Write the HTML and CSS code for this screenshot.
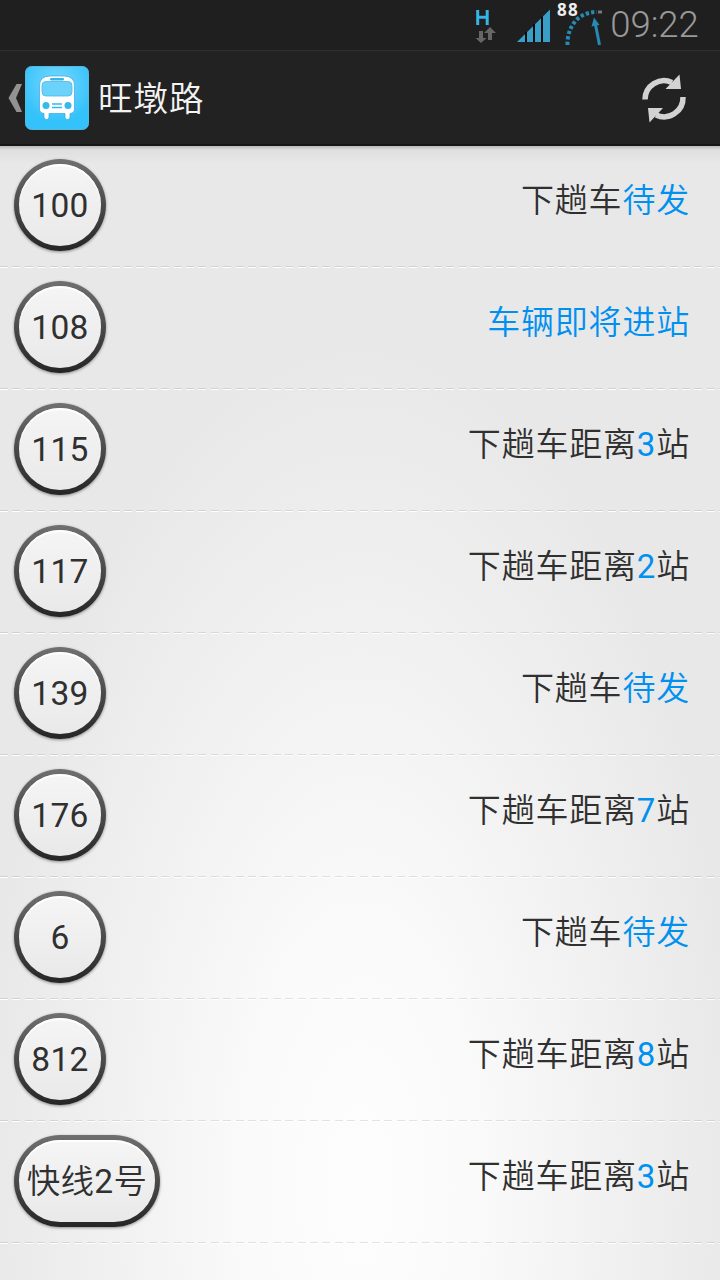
FILE: index.html
```html
<!DOCTYPE html>
<html lang="zh-CN">
<head>
<meta charset="utf-8">
<title>旺墩路</title>
<link rel="stylesheet" href="styles.css">
</head>
<body>
<div class="status">
  <svg class="status-icons" width="130" height="50" viewBox="475 0 130 50">
    <path d="M477.700 10V25M487.200 10V25M477.700 17.200H487.200" fill="none" stroke="#35b5e5" stroke-width="3"/>
    <path d="M479 31h4v7h3.500l-5.500 5l-5.500-5h3.500zM488 40h4v-7h4l-6-6l-6 6h4z" fill="#666"/>
    <path d="M517 42L550 9.500V42z" fill="#3a9fc7"/>
    <path d="M526 32V42M534 24V42M542 16.500V42" stroke="#0b0b0b" stroke-width="2"/>
    <path d="M567.500 45C567 28 577 12 597 12" fill="none" stroke="#258ab4" stroke-width="4" stroke-dasharray="3.300 2.200"/>
    <path d="M598 10.500h4v3h-4z" fill="#777"/>
    <path d="M599.500 45L595 22" fill="none" stroke="#258ab4" stroke-width="3"/>
    <path d="M594 17.500l5.500 7.500l-8 1.500z" fill="#258ab4"/>
    <text class="battery" x="557" y="16">88</text>
  </svg>
  <span class="clock">09:22</span>
</div>
<header class="bar">
  <svg class="back" width="17" height="30" viewBox="0 0 17 30"><path d="M8.500 1H14L8 15l6 14H8.500L.5 15z" fill="#929292"/></svg>
  <svg class="logo" width="64" height="64" viewBox="0 0 64 64">
    <defs><radialGradient id="sky" cx=".5" cy=".28" r=".6"><stop offset="0" stop-color="#7ad8ff"/><stop offset="1" stop-color="#34c2fa"/></radialGradient></defs>
    <rect x=".5" y=".5" width="63" height="63" rx="6" fill="url(#sky)" stroke="#55b9df"/>
    <path d="M14.500 20Q14.500 10 25 10H39Q49.500 10 49.500 20V43Q49.500 47 45 47.500V51Q45 53.500 42.500 53.500T40 51V47.500H24V51Q24 53.500 21.500 53.500T19 51V47.500Q14.500 47 14.500 43z" fill="#fff" stroke="#35a9d9" stroke-width=".7"/>
    <rect x="25" y="12" width="14" height="2.500" rx="1.200" fill="#36b5e8"/>
    <rect x="17" y="15.500" width="30" height="14.500" rx="4" fill="#6bd2fc" stroke="#48b8e7" stroke-width=".8"/>
    <circle cx="21" cy="39.500" r="3.500" fill="#36b9ed"/><circle cx="43" cy="39.500" r="3.500" fill="#36b9ed"/>
    <path d="M27 38h10M27 41.500h10" stroke="#36b9ed" stroke-width="1.500"/>
  </svg>
  <h1 class="title">旺墩路</h1>
  <svg class="refresh" width="46" height="50" viewBox="641 74 46 50">
    <path d="M645 99.500A19 19 0 0 1 672 82.500M683 97A19 19 0 0 1 656 115" fill="none" stroke="#d2d2d2" stroke-width="5.500"/>
    <path d="M679.500 74.500L681 89H665.500zM649.500 122.500L648 108H663z" fill="#d2d2d2"/>
  </svg>
</header>
<main class="list">
  <div class="row"><span class="line num">100</span><p class="info">下趟车<b>待发</b></p></div>
  <div class="row"><span class="line num">108</span><p class="info"><b>车辆即将进站</b></p></div>
  <div class="row"><span class="line num">115</span><p class="info">下趟车距离<b class="num">3</b>站</p></div>
  <div class="row"><span class="line num">117</span><p class="info">下趟车距离<b class="num">2</b>站</p></div>
  <div class="row"><span class="line num">139</span><p class="info">下趟车<b>待发</b></p></div>
  <div class="row"><span class="line num">176</span><p class="info">下趟车距离<b class="num">7</b>站</p></div>
  <div class="row"><span class="line num">6</span><p class="info">下趟车<b>待发</b></p></div>
  <div class="row"><span class="line num">812</span><p class="info">下趟车距离<b class="num">8</b>站</p></div>
  <div class="row"><span class="line name">快线<span class="num">2</span>号</span><p class="info">下趟车距离<b class="num">3</b>站</p></div>
</main>
</body>
</html>
```

FILE: styles.css
```css
* { box-sizing: border-box; }
body {
  margin: 0;
  height: 1280px;
  overflow: hidden;
  display: flex;
  flex-direction: column;
  font-family: Roboto, "Noto Sans CJK SC", sans-serif;
  font-weight: 350;
}
.status {
  height: 50px;
  flex: none;
  background: #1f1f1f;
  display: flex;
  justify-content: flex-end;
  align-items: center;
  padding-right: 21px;
}
.status-icons { margin-right: 5px; overflow: visible; }
.battery { font: 700 17px "Open Sans", sans-serif; letter-spacing: 1.300px; fill: #eee; }
.clock {
  width: 89px;
  text-align: center;
  font-size: 36.500px;
  font-weight: 300;
  line-height: 50px;
  color: #999;
}
.bar {
  height: 96px;
  flex: none;
  background: #222;
  border-top: 1px solid #303030;
  border-bottom: 2px solid #161616;
  display: flex;
  align-items: center;
  padding: 0 33px 0 8px;
}
.logo { flex: none; }
.title {
  margin: 3px auto 0 9px;
  font-size: 34.500px;
  letter-spacing: 1px;
  line-height: 50px;
  font-weight: 350;
  color: #f3f3f3;
}
.refresh { margin-top: 3px; }
.list {
  flex: 1;
  background:
    linear-gradient(rgba(0,0,0,.2), rgba(0,0,0,.04) 4px, transparent 18px),
    radial-gradient(ellipse 380px 850px at 360px 1040px, #fdfdfd 0, #fafafa 30%, #e8e8e8 100%);
}
.row {
  height: 122px;
  display: flex;
  justify-content: space-between;
  padding: 12.500px 30px 0 14px;
  background:
    repeating-linear-gradient(90deg, rgba(0,0,0,.1) 0 8px, transparent 8px 12.400px) 0 120px / 100% 1px no-repeat,
    repeating-linear-gradient(90deg, #fff 0 8px, transparent 8px 12.400px) 0 121px / 100% 1px no-repeat;
}
.line {
  height: 92px;
  min-width: 92px;
  padding: 2px 7px 0;
  border: 5px solid transparent;
  border-radius: 46px;
  background:
    linear-gradient(#f5f5f5, #e9e9e9) padding-box,
    linear-gradient(#707070, #252525) border-box;
  box-shadow: 0 1px 3px rgba(0,0,0,.4), inset 0 2px 1px #fff;
  font-size: 33.500px;
  letter-spacing: .3px;
  line-height: 80px;
  text-align: center;
  color: #303030;
}
.name { width: 146px; padding: 2px 0 0; }
.info {
  margin: 17.500px 0 0;
  font-size: 33px;
  letter-spacing: .8px;
  line-height: 50px;
  color: #303030;
}
.info b { font-weight: 350; color: #0090f0; }
.num, .info .num { font-weight: 400; }
```
